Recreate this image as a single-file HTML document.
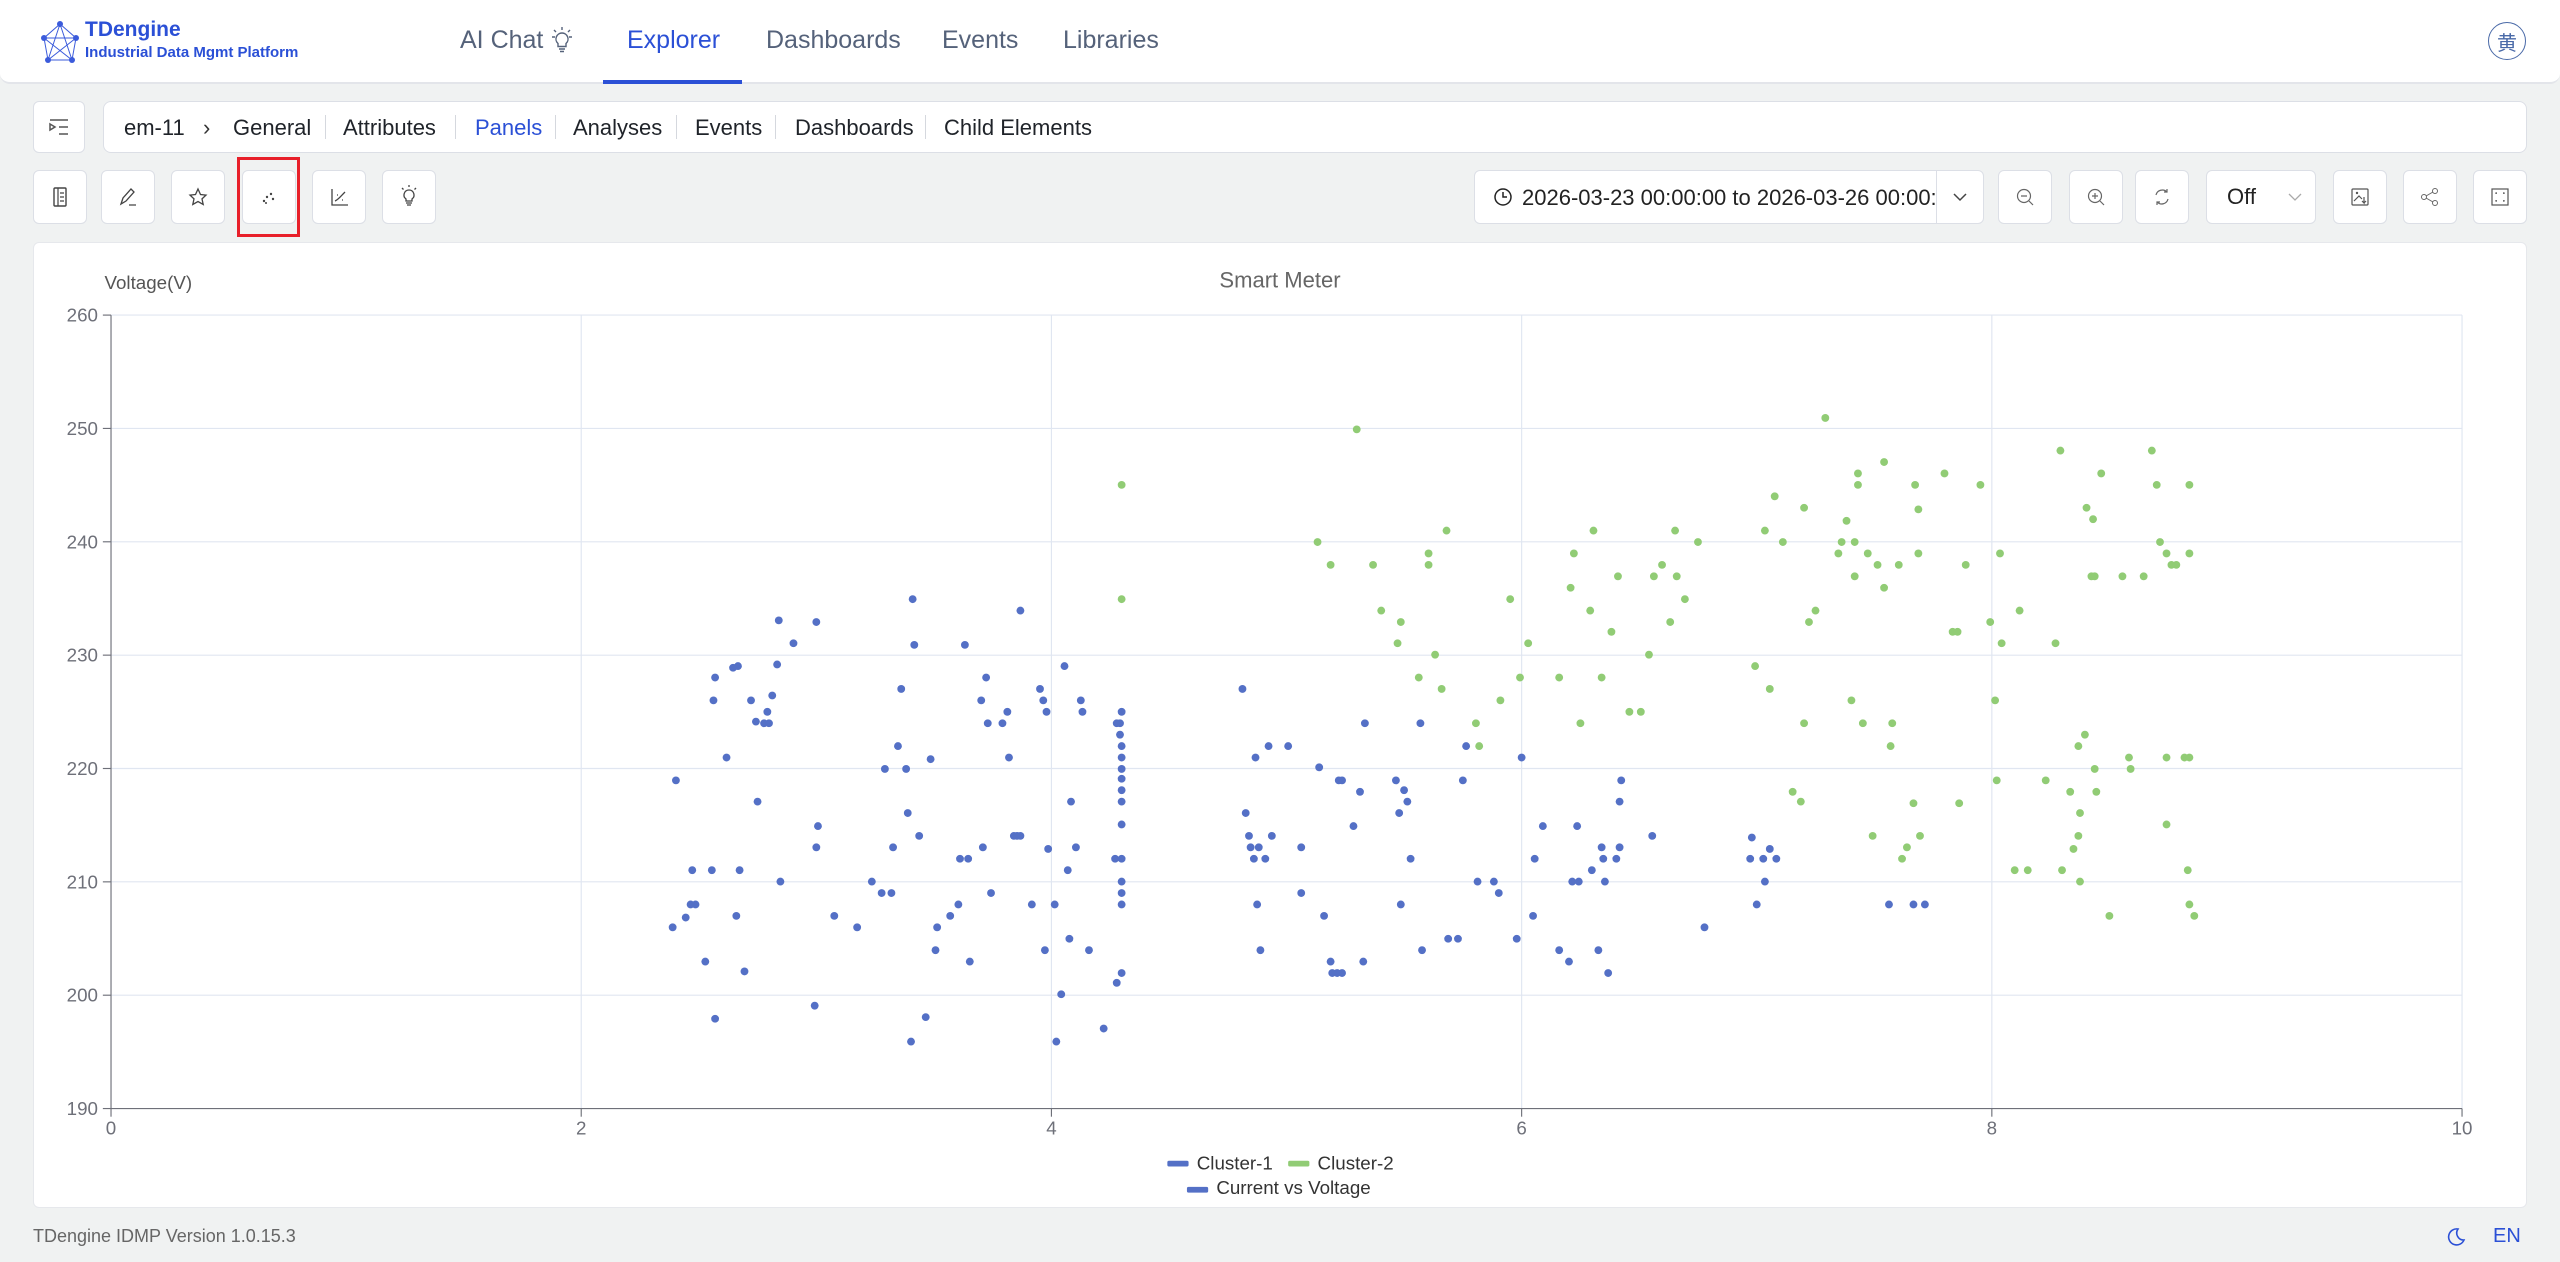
<!DOCTYPE html>
<html><head><meta charset="utf-8"><style>
*{box-sizing:border-box;margin:0;padding:0}
body{width:2560px;height:1262px;background:#f0f2f2;font-family:"Liberation Sans","Noto Sans CJK SC",sans-serif;position:relative;overflow:hidden;color:#1f2329}
.hdr{position:absolute;left:0;top:0;width:2560px;height:84px;background:#fff;border-bottom:2px solid #e3e5ea;border-radius:0 0 10px 10px}
.nav{position:absolute;top:26px;font-size:25px;color:#55627a}
.btn{position:absolute;background:#fff;border:1px solid #dcdfe6;border-radius:6px;top:170px;height:54px;width:54px;display:flex;align-items:center;justify-content:center}
.crumb{position:absolute;top:115px;font-size:22px;color:#1f2329}
.sep{position:absolute;top:115px;width:1px;height:24px;background:#d5d8de}
</style></head><body>
<div class="hdr">
 <svg style="position:absolute;left:40px;top:20px" width="40" height="46" viewBox="0 0 40 46"><g stroke="#3b5bdb" stroke-width="1" fill="none"><path d="M20 4 L4 18 L8 40 L32 40 L36 18 Z M20 4 L8 40 M20 4 L32 40 M4 18 L36 18 M4 18 L32 40 M36 18 L8 40"/></g><g fill="#3b5bdb"><circle cx="20" cy="4" r="3"/><circle cx="4" cy="18" r="3"/><circle cx="36" cy="18" r="3"/><circle cx="8" cy="40" r="3"/><circle cx="32" cy="40" r="3"/></g></svg>
 <div style="position:absolute;left:85px;top:18px;font-size:21px;font-weight:bold;color:#2b50d6">TDengine</div>
 <div style="position:absolute;left:85px;top:44px;font-size:15px;font-weight:bold;color:#2b50d6">Industrial Data Mgmt Platform</div>
 <div class="nav" style="left:460px">AI Chat</div>
 <svg style="position:absolute;left:551px;top:26px" width="22" height="28"><path d="M11 7a6 6 0 0 0-4 10.5v3h8v-3A6 6 0 0 0 11 7zM8 23h6M9 25.5h4M11 1v3M3 4l2 2M19 4l-2 2M1 11h3M18 11h3" stroke="#55627a" fill="none" stroke-width="1.4"/></svg>
 <div class="nav" style="left:627px;color:#2b50d6">Explorer</div>
 <div style="position:absolute;left:603px;top:80px;width:139px;height:4px;background:#2b50d6"></div>
 <div class="nav" style="left:766px">Dashboards</div>
 <div class="nav" style="left:942px">Events</div>
 <div class="nav" style="left:1063px">Libraries</div>
 <div style="position:absolute;left:2488px;top:22px;width:38px;height:38px;border:1.5px solid #4a6aa8;border-radius:50%;font-size:20px;color:#4a6aa8;display:flex;align-items:center;justify-content:center">黄</div>
</div>
<div class="btn" style="left:33px;top:101px;height:52px;width:52px"><svg width="24" height="20"><path d="M3 3h18M12 10h9M12 17h9M3 7l5 3-5 3z" stroke="#555" stroke-width="1.5" fill="none"/></svg></div>
<div style="position:absolute;left:103px;top:101px;width:2424px;height:52px;background:#fff;border:1px solid #dcdfe6;border-radius:8px"></div>
<div class="crumb" style="left:124px">em-11</div>
<div class="crumb" style="left:203px;color:#333">›</div>
<div class="crumb" style="left:233px">General</div><div class="sep" style="left:325px"></div>
<div class="crumb" style="left:343px">Attributes</div><div class="sep" style="left:455px"></div>
<div class="crumb" style="left:475px;color:#2b50d6">Panels</div><div class="sep" style="left:555px"></div>
<div class="crumb" style="left:573px">Analyses</div><div class="sep" style="left:676px"></div>
<div class="crumb" style="left:695px">Events</div><div class="sep" style="left:775px"></div>
<div class="crumb" style="left:795px">Dashboards</div><div class="sep" style="left:925px"></div>
<div class="crumb" style="left:944px">Child Elements</div>
<div class="btn" style="left:33px"><svg width="22" height="22"><rect x="5" y="2" width="12" height="18" rx="1" stroke="#444" fill="none" stroke-width="1.4"/><path d="M9 2v18M11 7h4M11 11h4M11 15h4" stroke="#444" stroke-width="1.2"/></svg></div>
<div class="btn" style="left:101px"><svg width="22" height="22"><path d="M4 18l2-6 8-9 3 3-8 9zM12 19h7" stroke="#444" fill="none" stroke-width="1.3"/></svg></div>
<div class="btn" style="left:171px"><svg width="22" height="22"><path d="M11 3l2.5 5.5 5.5.6-4 3.8 1.2 5.6-5.2-3-5.2 3 1.2-5.6-4-3.8 5.5-.6z" stroke="#444" fill="none" stroke-width="1.3"/></svg></div>
<div class="btn" style="left:242px"><svg width="22" height="22" fill="#444"><circle cx="6" cy="15" r="1.2"/><circle cx="9" cy="11" r="1.2"/><circle cx="13" cy="8" r="1.2"/><circle cx="15" cy="13" r="1.2"/><circle cx="8" cy="17" r="1"/></svg></div>
<div style="position:absolute;left:237px;top:157px;width:63px;height:80px;border:3px solid #e8202a"></div>
<div class="btn" style="left:312px"><svg width="22" height="22"><path d="M4 3v16h16M7 15c3-1 6-5 10-9M9 9h1M14 14h1" stroke="#444" fill="none" stroke-width="1.3"/></svg></div>
<div class="btn" style="left:382px"><svg width="22" height="26"><path d="M11 6a5 5 0 0 0-3 9v2h6v-2a5 5 0 0 0-3-9zM8 19h6M9 21h4M11 1v2M4 4l1.5 1.5M18 4l-1.5 1.5" stroke="#444" fill="none" stroke-width="1.3"/></svg></div>
<div style="position:absolute;left:1474px;top:170px;width:510px;height:54px;background:#fff;border:1px solid #dcdfe6;border-radius:6px"></div>
<div style="position:absolute;left:1936px;top:171px;width:1px;height:52px;background:#dcdfe6"></div>
<svg style="position:absolute;left:1492px;top:186px" width="22" height="22"><circle cx="11" cy="11" r="8" stroke="#222" fill="none" stroke-width="1.5"/><path d="M11 6v5h4" stroke="#222" fill="none" stroke-width="1.5"/></svg>
<div style="position:absolute;left:1522px;top:185px;font-size:22px;color:#222">2026-03-23 00:00:00 to 2026-03-26 00:00:</div>
<svg style="position:absolute;left:1950px;top:188px" width="20" height="18"><path d="M4 6l6 6 6-6" stroke="#444" fill="none" stroke-width="1.5"/></svg>
<div class="btn" style="left:1998px"><svg width="22" height="22"><circle cx="10" cy="10" r="6.5" stroke="#666" fill="none" stroke-width="1.2"/><path d="M7 10h6M15 15l4 4" stroke="#666" stroke-width="1.2"/></svg></div>
<div class="btn" style="left:2069px"><svg width="22" height="22"><circle cx="10" cy="10" r="6.5" stroke="#666" fill="none" stroke-width="1.2"/><path d="M7 10h6M10 7v6M15 15l4 4" stroke="#666" stroke-width="1.2"/></svg></div>
<div class="btn" style="left:2135px"><svg width="22" height="22"><path d="M5 9a6.5 6.5 0 0 1 11-3M17 13a6.5 6.5 0 0 1-11 3M16 3v3h-3M6 19v-3h3" stroke="#666" fill="none" stroke-width="1.2"/></svg></div>
<div class="btn" style="left:2206px;width:110px;justify-content:flex-start;padding-left:20px;font-size:22px;color:#222">Off<svg style="margin-left:30px" width="18" height="14"><path d="M3 4l6 6 6-6" stroke="#aaa" fill="none" stroke-width="1.3"/></svg></div>
<div class="btn" style="left:2333px"><svg width="22" height="22"><rect x="3" y="3" width="16" height="16" rx="1" stroke="#555" fill="none" stroke-width="1.2"/><path d="M5 15l5-5 3 3M15 11v6l-2-2M15 17l2-2" stroke="#555" fill="none" stroke-width="1.2"/><circle cx="8" cy="7" r="1.2" fill="#555"/></svg></div>
<div class="btn" style="left:2403px"><svg width="22" height="22"><circle cx="16" cy="5" r="2.5" stroke="#666" fill="none"/><circle cx="5" cy="11" r="2.5" stroke="#666" fill="none"/><circle cx="16" cy="17" r="2.5" stroke="#666" fill="none"/><path d="M7 10l7-4M7 12l7 4" stroke="#666"/></svg></div>
<div class="btn" style="left:2473px"><svg width="22" height="22"><rect x="3" y="3" width="16" height="16" stroke="#555" fill="none" stroke-width="1.2"/><path d="M7 8V7h1M15 8V7h-1M7 14v1h1M15 14v1h-1" stroke="#555" fill="none" stroke-width="1.2"/></svg></div>
<div style="position:absolute;left:33px;top:242px;width:2494px;height:966px;background:#fff;border:1px solid #e6e8ec;border-radius:6px"></div>
<svg id="ch" style="position:absolute;left:0;top:0" width="2560" height="1262" viewBox="0 0 1568 773" preserveAspectRatio="none" font-family="Liberation Sans, sans-serif">
<text x="784" y="176" text-anchor="middle" font-size="13.5" fill="#666">Smart Meter</text>
<text x="64" y="177" font-size="11.5" fill="#555">Voltage(V)</text>
<g id="grid" stroke="#e0e6f1" stroke-width="0.7"></g>
<g id="lab" font-size="11.5" fill="#6e7079"></g>
<path d="M68 193V679H1508" stroke="#6e7079" stroke-width="0.7" fill="none"/>
<g id="pts"></g>
<rect x="715" y="711" width="13" height="3.5" rx="1" fill="#5470c6"/><text x="733" y="716.5" font-size="11.5" fill="#333">Cluster-1</text>
<rect x="789" y="711" width="13" height="3.5" rx="1" fill="#91cc75"/><text x="807" y="716.5" font-size="11.5" fill="#333">Cluster-2</text>
<rect x="727" y="727" width="13" height="3.5" rx="1" fill="#5470c6"/><text x="745" y="731.5" font-size="11.5" fill="#333">Current vs Voltage</text>
</svg>
<div style="position:absolute;left:33px;top:1226px;font-size:18px;color:#666">TDengine IDMP Version 1.0.15.3</div>
<svg style="position:absolute;left:2444px;top:1226px" width="22" height="22"><path d="M14 3a8 8 0 1 0 6 11a7 7 0 0 1-6-11z" stroke="#2b50d6" fill="none" stroke-width="1.6"/></svg>
<div style="position:absolute;left:2493px;top:1225px;font-size:20px;color:#2b50d6">EN</div>
<script>
var NS="http://www.w3.org/2000/svg";
function el(p,t,a,txt){var e=document.createElementNS(NS,t);for(var k in a)e.setAttribute(k,a[k]);if(txt!=null)e.textContent=txt;document.getElementById(p).appendChild(e);}
for(var i=0;i<=7;i++){var y=193+i*69.43;if(i<7)el("grid","line",{x1:68,x2:1508,y1:y,y2:y});el("grid","line",{x1:63,x2:68,y1:y,y2:y,stroke:"#6e7079"});el("lab","text",{x:60,y:y+4,"text-anchor":"end"},260-i*10);}
for(var i=0;i<=5;i++){var x=68+i*288;if(i>0)el("grid","line",{x1:x,x2:x,y1:193,y2:679});el("grid","line",{x1:x,x2:x,y1:679,y2:684,stroke:"#6e7079"});el("lab","text",{x:x,y:695,"text-anchor":"middle"},i*2);}
var B=[414,478,412,568,420,562,423,554,424,533,426,554,437,429,432,589,438,415,436,533,438,624,445,464,449,409,453,533,451,561,452,408,456,595,460,429,463,442,464,491,468,443,470,436,471,443,473,426,476,407,478,540,477,380,486,394,500,381,500,519,501,506,499,616,511,561,525,568,534,540,540,547,542,471,546,547,547,519,550,457,552,422,555,471,556,498,558,638,560,395,559,367,563,512,567,623,570,465,573,582,574,568,582,561,587,554,588,526,591,395,593,526,594,589,601,429,602,519,604,415,605,443,607,547,614,443,617,436,618,464,621,512,623,512,625,512,625,374,632,554,637,422,639,429,640,582,641,436,642,520,646,554,647,638,650,609,652,408,654,533,655,575,656,491,659,519,662,429,663,436,667,582,676,630,684,602,684,443,686,450,687,596,683,526,687,436,686,443,687,457,687,464,687,471,687,477,687,484,687,491,687,505,687,526,687,540,687,547,687,554,761,422,763,498,765,512,766,519,768,526,770,554,769,464,771,519,772,582,777,457,775,526,779,512,789,457,797,547,797,519,808,470,811,561,815,589,816,596,819,596,820,478,822,596,822,478,829,506,833,485,835,589,836,443,855,478,857,498,858,554,860,484,862,491,864,526,871,582,870,443,887,575,893,575,896,478,898,457,905,540,915,540,918,547,929,575,932,464,939,561,940,526,945,506,955,582,961,589,963,540,966,506,967,540,975,533,979,582,981,519,982,526,985,596,983,540,990,526,992,491,993,478,992,519,1012,512,1044,568,1072,526,1073,513,1076,554,1080,526,1081,540,1084,520,1088,526,1157,554,1172,554,1179,554];
var G=[687,297,687,367,807,332,831,263,815,346,841,346,846,374,858,381,856,394,869,415,875,346,875,339,879,401,886,325,883,422,906,457,904,443,919,429,925,367,931,415,936,394,955,415,962,360,964,339,968,443,974,374,976,325,981,415,987,387,991,353,998,436,1005,436,1010,401,1013,353,1018,346,1023,381,1026,325,1027,353,1032,367,1040,332,1075,408,1081,325,1084,422,1087,304,1092,332,1098,485,1103,491,1105,443,1105,311,1108,381,1112,374,1118,256,1126,339,1128,332,1131,319,1134,429,1136,353,1136,332,1138,297,1138,290,1141,443,1144,339,1147,512,1150,346,1154,360,1154,283,1158,457,1159,443,1163,346,1165,526,1168,519,1172,492,1173,297,1175,312,1175,339,1176,512,1191,290,1196,387,1199,387,1200,492,1204,346,1213,297,1219,381,1222,429,1223,478,1225,339,1226,394,1234,533,1237,374,1242,533,1253,478,1259,394,1262,276,1263,533,1268,485,1270,520,1273,512,1274,498,1274,540,1273,457,1277,450,1278,311,1282,318,1281,353,1283,353,1283,471,1284,485,1287,290,1292,561,1300,353,1304,464,1305,471,1313,353,1318,276,1321,297,1323,332,1327,339,1327,464,1327,505,1330,346,1333,346,1338,464,1340,533,1341,297,1341,554,1341,339,1344,561,1341,464];
for(var i=0;i<B.length;i+=2)el("pts","circle",{cx:B[i],cy:B[i+1],r:2.4,fill:"#5470c6"});
for(var i=0;i<G.length;i+=2)el("pts","circle",{cx:G[i],cy:G[i+1],r:2.4,fill:"#91cc75"});
</script>
</body></html>
